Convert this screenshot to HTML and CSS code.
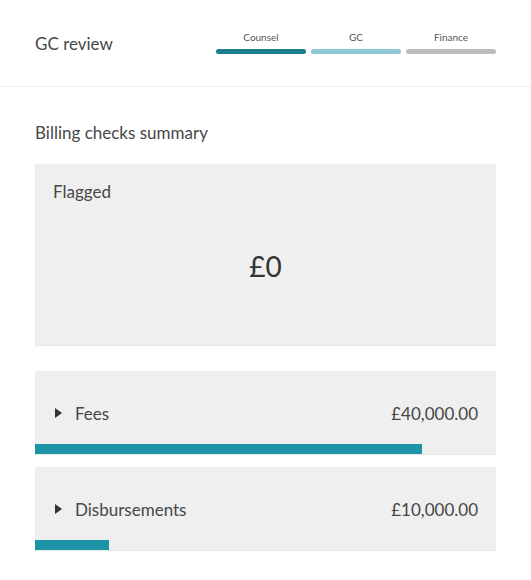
FILE: index.html
```html
<!DOCTYPE html>
<html lang="en">
<head>
	<meta charset="UTF-8">
	<title>GC review</title>
	<link rel="stylesheet" href="styles.css">
</head>
<body>
	<div class="header">
		<h1 class="title">GC review</h1>
		<ul class="steps">
			<li class="step done"><span>Counsel</span><i></i></li>
			<li class="step current"><span>GC</span><i></i></li>
			<li class="step"><span>Finance</span><i></i></li>
		</ul>
	</div>
	<div class="content">
		<h2 class="section">Billing checks summary</h2>
		<div class="flagged">
			<div class="label">Flagged</div>
			<div class="value">£0</div>
		</div>
		<div class="line">
			<div class="row">
				<span class="arrow"></span>
				<span class="name">Fees</span>
				<span class="amount">£40,000.00</span>
			</div>
			<div class="bar" style="width:84%;"></div>
		</div>
		<div class="line">
			<div class="row">
				<span class="arrow"></span>
				<span class="name">Disbursements</span>
				<span class="amount">£10,000.00</span>
			</div>
			<div class="bar" style="width:16%;"></div>
		</div>
	</div>
</body>
</html>
```

FILE: styles.css
```css
body{
	margin: 0;
	font-family: Lato, "Open Sans", sans-serif;
	color: #474747;
	background: #fff;
}
ul{
	list-style: none;
	margin: 0;
	padding: 0;
}
.header{
	height: 86px;
	display: flex;
	align-items: center;
	justify-content: space-between;
	padding: 0 35px;
	border-bottom: 1px solid #eee;
}
.title{
	margin: 0;
	font-size: 17px;
	font-weight: normal;
}
.steps{
	display: flex;
	gap: 5px;
	margin-bottom: 2px;
}
.step{
	width: 90px;
	display: flex;
	flex-direction: column;
	align-items: center;
	gap: 6px;
	font-size: 10px;
	line-height: 12px;
	color: #555;
}
.step i{
	display: block;
	width: 100%;
	height: 5px;
	border-radius: 3px;
	background: #bdbdbd;
}
.step.done i{
	background: #1a7d8c;
}
.step.current i{
	background: #8fc8d5;
}
.content{
	padding: 0 35px;
}
.section{
	margin: 36px 0 21px;
	font-size: 17px;
	line-height: 20px;
	font-weight: normal;
}
.flagged{
	height: 182px;
	box-sizing: border-box;
	padding: 18px;
	background: #efefef;
	border-bottom: 1px solid #e6e6e6;
	margin-bottom: 25px;
}
.label{
	font-size: 17px;
	line-height: 20px;
}
.value{
	margin-top: 47px;
	text-align: center;
	font-size: 28px;
	line-height: 34px;
	color: #333;
}
.line{
	background: #efefef;
	border-bottom: 1px solid #e6e6e6;
	margin-bottom: 12px;
}
.row{
	display: flex;
	align-items: center;
	height: 24px;
	padding: 30px 18px 19px 20px;
	font-size: 17px;
}
.arrow{
	width: 0;
	height: 0;
	border-top: 5.5px solid transparent;
	border-bottom: 5.5px solid transparent;
	border-left: 7px solid #333;
	margin-right: 13px;
}
.name{
	flex: 1;
}
.bar{
	height: 10px;
	background: #1d93a7;
}
```
